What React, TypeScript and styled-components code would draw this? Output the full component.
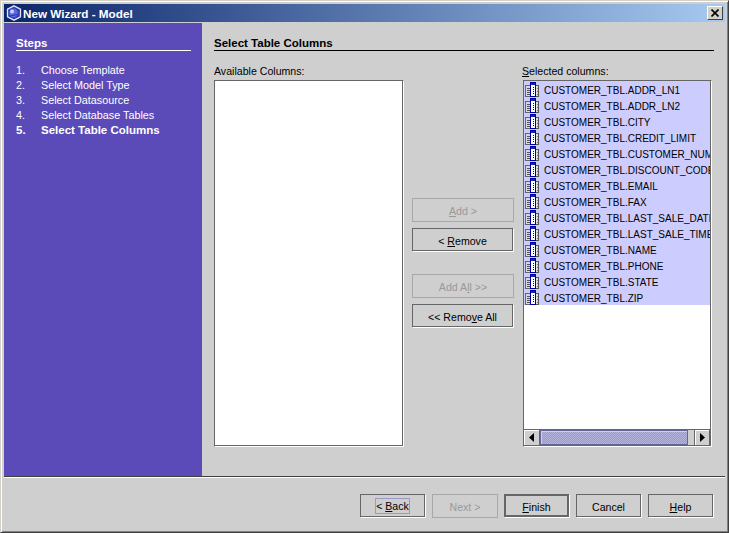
import React from 'react'
import styled, { createGlobalStyle } from 'styled-components'

const GlobalStyle = createGlobalStyle`
  html, body {
    margin: 0;
    padding: 0;
    background: #cfcfcf;
    overflow: hidden;
  }
  * {
    box-sizing: border-box;
  }
`

const Frame = styled.div`
  width: 729px;
  height: 533px;
  display: flex;
  flex-direction: column;
  padding: 3px;
  background: #cfcfcf;
  border: 1px solid;
  border-color: #d4d0c8 #404040 #404040 #d4d0c8;
  box-shadow: inset 1px 1px 0 #ffffff, inset -1px -1px 0 #808080;
  font-family: 'Liberation Sans', Arial, sans-serif;
  font-size: 10.6px;
  line-height: 13px;
  color: #000;
`

const TitleBar = styled.div`
  height: 18px;
  flex: none;
  margin-bottom: 1px;
  display: flex;
  align-items: center;
  padding: 0 2px 0 2px;
  background: linear-gradient(90deg, #0a246a 0%, #a6caf0 100%);
`

const TitleText = styled.span`
  flex: 1;
  margin-left: 1px;
  font-size: 11.7px;
  font-weight: bold;
  color: #fff;
`

const CloseButton = styled.div`
  width: 16px;
  height: 14px;
  display: flex;
  align-items: center;
  justify-content: center;
  background: #d4d0c8;
  border: 1px solid;
  border-color: #fff #404040 #404040 #fff;
`

const Body = styled.div`
  flex: 1;
  display: flex;
  min-height: 0;
`

const Sidebar = styled.div`
  width: 198px;
  padding: 14px 11px 0 12px;
  background: #5a4bb8;
  color: #fff;
`

const StepsTitle = styled.div`
  height: 14px;
  border-bottom: 1px solid #fff;
  font-size: 11.5px;
  font-weight: bold;
  margin-bottom: 12px;
`

const StepRow = styled.div<{ $active?: boolean }>`
  display: flex;
  height: 15px;
  align-items: center;
  font-size: ${(p) => (p.$active ? '11.5px' : '10.8px')};
  font-weight: ${(p) => (p.$active ? 'bold' : 'normal')};
`

const StepNumber = styled.span`
  width: 25px;
`

const Main = styled.div`
  flex: 1;
  padding: 14px 11px 0 12px;
`

const Heading = styled.div`
  height: 14px;
  border-bottom: 1px solid #000;
  font-size: 11.5px;
  font-weight: bold;
  margin-bottom: 14px;
`

const Columns = styled.div`
  display: grid;
  grid-template-columns: 190px 102px 190px;
  grid-template-rows: 15px 367px;
  column-gap: 8px;
`

const Label = styled.div`
  height: 13px;
`

const ListBox = styled.div<{ $inset?: boolean }>`
  display: flex;
  flex-direction: column;
  margin-left: ${(p) => (p.$inset ? '1px' : '0')};
  background: #fff;
  border: 1px solid;
  border-color: #666 #fff #fff #666;
  box-shadow: inset -1px -1px 0 #666;
  padding: 0 1px 1px 0;
  min-width: 0;
`

const ListRows = styled.div`
  flex: 1;
  min-height: 0;
  overflow: hidden;
`

const ListRow = styled.div`
  height: 16px;
  padding-top: 2px;
  display: flex;
  align-items: center;
  gap: 4px;
  font-size: 10px;
  white-space: nowrap;
  background: #ccccff;
  overflow: hidden;
`

const RowIcon = styled.svg`
  flex: none;
  align-self: flex-start;
  margin-top: -1px;
`

const ScrollBar = styled.div`
  height: 16px;
  display: flex;
  flex: none;
  background: #cfcfcf;
  border-top: 1px solid #666;
`

const ScrollArrow = styled.div<{ $width: number }>`
  width: ${(p) => p.$width}px;
  display: flex;
  align-items: center;
  justify-content: center;
  border-right: 1px solid #666;
  box-shadow: inset 1px 1px 0 #fff;
`

const ScrollThumb = styled.div`
  width: 148px;
  border: 1px solid #666699;
  box-shadow: inset 1px 1px 0 #ccccff;
  background: repeating-conic-gradient(#9999cc 0 25%, #b4b4dc 0 50%) 0 0 / 2px 2px;
`

const ScrollTrack = styled.div`
  flex: 1;
  border-right: 1px solid #666;
`

const ButtonStack = styled.div`
  grid-column: 2;
  grid-row: 2;
  align-self: start;
  margin-top: 118px;
  display: flex;
  flex-direction: column;
`

const ButtonPair = styled.div`
  display: flex;
  flex-direction: column;
  gap: 6px;
  & + & {
    margin-top: 22px;
  }
`

const Button = styled.div<{ $disabled?: boolean; $default?: boolean; $width?: number }>`
  flex: none;
  width: ${(p) => (p.$width ?? 102) - (p.$disabled ? 0 : 1)}px;
  height: ${(p) => (p.$disabled ? 24 : 23)}px;
  display: flex;
  align-items: center;
  justify-content: center;
  padding-top: ${(p) => (p.$disabled ? 2 : 3)}px;
  white-space: pre;
  color: ${(p) => (p.$disabled ? '#999' : '#000')};
  border: ${(p) => (p.$default ? '2px' : '1px')} solid ${(p) => (p.$disabled ? '#a8a8a8' : '#666')};
  box-shadow: ${(p) => (p.$disabled ? 'none' : '1px 1px 0 #fff')};
  margin: ${(p) => (p.$disabled ? 0 : '0 1px 1px 0')};
`

const FocusRing = styled.span`
  border: 1px solid #9999cc;
  margin: -2px -1px 0;
  padding: 1px 0 0;
  height: 16px;
`

const Footer = styled.div`
  flex: none;
  height: 53px;
  display: flex;
  justify-content: flex-end;
  gap: 6px;
  padding: 17px 11px 0 0;
  border-top: 1px solid #404040;
  box-shadow: inset 0 1px 0 #fff;
`

const FileIcon = () => (
  <RowIcon width="16" height="15" viewBox="0 0 16 15" shapeRendering="crispEdges">
    <rect x="1.5" y="3.5" width="5" height="11" fill="#d8d8d8" stroke="#666" />
    <path d="M2.5 6.5h3M2.5 8.5h3M2.5 10.5h3M2.5 12.5h3" stroke="#555" />
    <rect x="6.5" y="0.5" width="5" height="14" fill="#fff" stroke="#0000a0" />
    <rect x="7" y="1" width="4" height="2" fill="#1028b0" />
    <path d="M9 5h1v1h-1zM9 7h1v1h-1zM9 9h1v1h-1zM9 11h1v1h-1z" fill="#0000c0" />
    <path d="M12 3.5h2.5v11H12" fill="#e0e0e0" stroke="#555" />
    <path d="M12.5 6.5h1M12.5 9.5h1M12.5 12.5h1" stroke="#777" />
  </RowIcon>
)

const AppIcon = () => (
  <svg width="16" height="16" viewBox="0 0 16 16" style={{ flex: 'none' }}>
    <path d="M8 0.8l6.5 3.4v7.6L8 15.2 1.5 11.8V4.2z" fill="#2f3fb4" stroke="#dfe4ff" strokeWidth="1.3" />
    <circle cx="7.5" cy="8" r="4.2" fill="#5c6ce0" />
    <circle cx="6" cy="6.5" r="2" fill="#c8d0ff" />
    <path d="M4 11l7-1.5" stroke="#1a2590" strokeWidth="0.8" />
  </svg>
)

const columns = [
  'ADDR_LN1',
  'ADDR_LN2',
  'CITY',
  'CREDIT_LIMIT',
  'CUSTOMER_NUM',
  'DISCOUNT_CODE',
  'EMAIL',
  'FAX',
  'LAST_SALE_DATE',
  'LAST_SALE_TIME',
  'NAME',
  'PHONE',
  'STATE',
  'ZIP',
]

const steps = [
  'Choose Template',
  'Select Model Type',
  'Select Datasource',
  'Select Database Tables',
  'Select Table Columns',
]

const App = () => {
  return (
    <Frame>
      <GlobalStyle />
      <TitleBar>
        <AppIcon />
        <TitleText>New Wizard - Model</TitleText>
        <CloseButton>
          <svg width="8" height="8" viewBox="0 0 8 8">
            <path d="M0.5 0.5l7 7M7.5 0.5l-7 7" stroke="#000" strokeWidth="1.6" />
          </svg>
        </CloseButton>
      </TitleBar>
      <Body>
        <Sidebar>
          <StepsTitle>Steps</StepsTitle>
          {steps.map((step, i) => (
            <StepRow key={step} $active={i === 4}>
              <StepNumber>{i + 1}.</StepNumber>
              {step}
            </StepRow>
          ))}
        </Sidebar>
        <Main>
          <Heading>Select Table Columns</Heading>
          <Columns>
            <Label>Available Columns:</Label>
            <span />
            <Label>
              <u>S</u>elected columns:
            </Label>
            <ListBox />
            <ButtonStack>
              <ButtonPair>
                <Button $disabled>
                  <span>
                    <u>A</u>dd &gt;
                  </span>
                </Button>
                <Button>
                  <span>
                    &lt; <u>R</u>emove
                  </span>
                </Button>
              </ButtonPair>
              <ButtonPair>
                <Button $disabled>
                  <span>
                    Add A<u>l</u>l &gt;&gt;
                  </span>
                </Button>
                <Button>
                  <span>
                    &lt;&lt; Remo<u>v</u>e All
                  </span>
                </Button>
              </ButtonPair>
            </ButtonStack>
            <ListBox $inset>
              <ListRows>
                {columns.map((c) => (
                  <ListRow key={c}>
                    <FileIcon />
                    CUSTOMER_TBL.{c}
                  </ListRow>
                ))}
              </ListRows>
              <ScrollBar>
                <ScrollArrow $width={16}>
                  <svg width="5" height="9" viewBox="0 0 5 9">
                    <path d="M5 0v9L0 4.5z" fill="#000" />
                  </svg>
                </ScrollArrow>
                <ScrollThumb />
                <ScrollTrack />
                <ScrollArrow $width={15}>
                  <svg width="5" height="9" viewBox="0 0 5 9">
                    <path d="M0 0v9l5-4.5z" fill="#000" />
                  </svg>
                </ScrollArrow>
              </ScrollBar>
            </ListBox>
          </Columns>
        </Main>
      </Body>
      <Footer>
        <Button $width={66}>
          <FocusRing>
            &lt; <u>B</u>ack
          </FocusRing>
        </Button>
        <Button $width={66} $disabled>
          <span>Next &gt;</span>
        </Button>
        <Button $width={66} $default>
          <span>
            <u>F</u>inish
          </span>
        </Button>
        <Button $width={66}>
          <span>Cancel</span>
        </Button>
        <Button $width={66}>
          <span>
            <u>H</u>elp
          </span>
        </Button>
      </Footer>
    </Frame>
  )
}

export default App
